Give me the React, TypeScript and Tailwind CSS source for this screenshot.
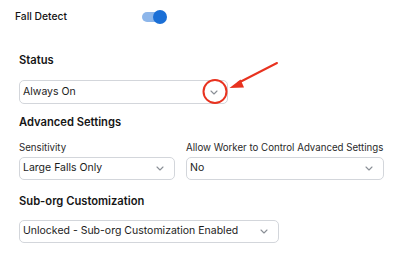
import React from 'react';

function Chevron() {
  return (
    <svg width="8" height="5" viewBox="0 0 8 5" fill="none" className="shrink-0">
      <path d="M1 1l3 3 3-3" stroke="#8a8f96" strokeWidth="1.1" strokeLinecap="round" strokeLinejoin="round" />
    </svg>
  );
}

function SelectBox({ value, width }: { value: string; width: string }) {
  return (
    <div
      className={`${width} h-[23px] flex items-center justify-between border border-[#d3d6db] rounded-[5px] pl-[3px] pr-[10px] bg-white`}
    >
      <span className="text-[10.5px] leading-none text-[#1c1c1c]">{value}</span>
      <Chevron />
    </div>
  );
}

function Heading({ children }: { children: React.ReactNode }) {
  return <div className="h-[16px] leading-[16px] text-[11.2px] font-semibold text-[#161616]">{children}</div>;
}

function Label({ children }: { children: React.ReactNode }) {
  return <div className="h-[12px] leading-[12px] text-[9.7px] text-[#2a2a2a] whitespace-nowrap">{children}</div>;
}

export default function App() {
  return (
    <div className="relative w-[398px] h-[268px] bg-white overflow-hidden font-['Inter',sans-serif]">
      <div className="h-[34px] flex items-center pl-[15px]">
        <span className="w-[127px] text-[10.3px] font-medium text-[#141414]">Fall Detect</span>
        <div className="relative w-[25px] h-[14px]">
          <div className="absolute left-0 top-[2px] w-[22px] h-[10px] rounded-full bg-[#8db6ea]" />
          <div className="absolute right-0 top-0 w-[14px] h-[14px] rounded-full bg-[#1b6fd6]" />
        </div>
      </div>

      <div className="pl-[19px]">
        <div className="mt-[18px]">
          <Heading>Status</Heading>
        </div>
        <div className="mt-[12px]">
          <div className="w-[209px] h-[24px] flex items-center justify-between border border-[#d3d6db] rounded-[5px] pl-[3px] pr-[9px]">
            <span className="text-[10.5px] leading-none text-[#1c1c1c]">Always On</span>
            <Chevron />
          </div>
        </div>

        <div className="mt-[10px]">
          <Heading>Advanced Settings</Heading>
        </div>
        <div className="mt-[12px] flex gap-[11px]">
          <div className="flex flex-col gap-[3px]">
            <Label>Sensitivity</Label>
            <SelectBox value="Large Falls Only" width="w-[156px]" />
          </div>
          <div className="flex flex-col gap-[3px]">
            <Label>Allow Worker to Control Advanced Settings</Label>
            <SelectBox value="No" width="w-[198px]" />
          </div>
        </div>

        <div className="mt-[13px]">
          <Heading>Sub-org Customization</Heading>
        </div>
        <div className="mt-[11px]">
          <SelectBox value="Unlocked - Sub-org Customization Enabled" width="w-[260px]" />
        </div>
      </div>

      <svg className="absolute left-0 top-0 pointer-events-none" width="398" height="268" viewBox="0 0 398 268" fill="none">
        <circle cx="215" cy="91.5" r="11.5" stroke="#e8321f" strokeWidth="2" />
        <line x1="277" y1="63" x2="238" y2="83" stroke="#e8321f" strokeWidth="2" strokeLinecap="round" />
        <path d="M229.5 88 L240.5 79.5 L244 87.5 Z" fill="#e8321f" />
      </svg>
    </div>
  );
}
